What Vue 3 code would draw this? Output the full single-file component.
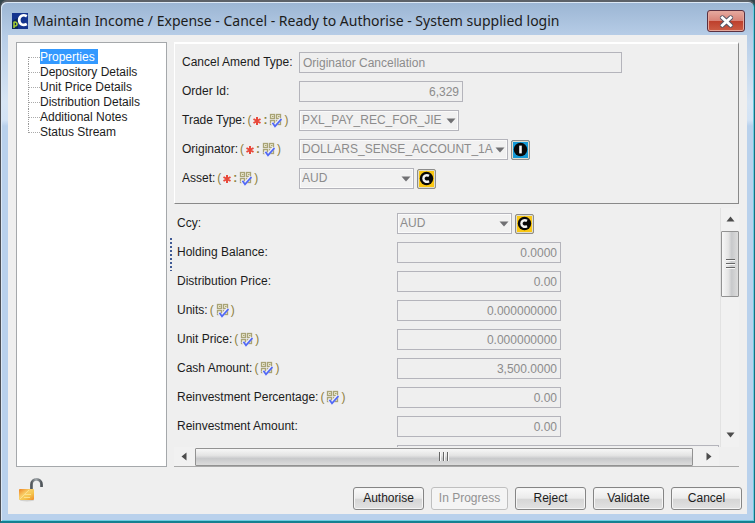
<script setup>
import { ref } from 'vue'

const sections = ['Properties', 'Depository Details', 'Unit Price Details', 'Distribution Details', 'Additional Notes', 'Status Stream']
const selected = ref('Properties')

const header = [
  { id: 'amend', label: 'Cancel Amend Type:', kind: 'text', value: 'Originator Cancellation', size: 'wide' },
  { id: 'order', label: 'Order Id:', kind: 'number', value: '6,329', size: 'medium' },
  { id: 'trade', label: 'Trade Type:', kind: 'select', value: 'PXL_PAY_REC_FOR_JIE', size: 'trade', required: true, checked: true },
  { id: 'originator', label: 'Originator:', kind: 'select', value: 'DOLLARS_SENSE_ACCOUNT_1A', size: 'account', required: true, checked: true, lookup: 'i' },
  { id: 'asset', label: 'Asset:', kind: 'select', value: 'AUD', size: 'short', required: true, checked: true, lookup: 'c' }
]

const details = [
  { id: 'ccy', label: 'Ccy:', kind: 'select', value: 'AUD', size: 'short', lookup: 'c' },
  { id: 'balance', label: 'Holding Balance:', kind: 'number', value: '0.0000', size: 'medium' },
  { id: 'distribution', label: 'Distribution Price:', kind: 'number', value: '0.00', size: 'medium' },
  { id: 'units', label: 'Units:', kind: 'number', value: '0.000000000', size: 'medium', checked: true },
  { id: 'unitprice', label: 'Unit Price:', kind: 'number', value: '0.000000000', size: 'medium', checked: true },
  { id: 'cash', label: 'Cash Amount:', kind: 'number', value: '3,500.0000', size: 'medium', checked: true },
  { id: 'percentage', label: 'Reinvestment Percentage:', kind: 'number', value: '0.00', size: 'medium', checked: true },
  { id: 'reinvest', label: 'Reinvestment Amount:', kind: 'number', value: '0.00', size: 'medium' }
]

const groups = [
  { name: 'summary', rows: header },
  { name: 'details', rows: details }
]

const actions = [
  { label: 'Authorise' },
  { label: 'In Progress', disabled: true, wide: true },
  { label: 'Reject' },
  { label: 'Validate' },
  { label: 'Cancel' }
]
</script>

<template>
  <div class="dialog">
    <svg class="symbols" aria-hidden="true">
      <symbol id="check" viewBox="0 0 13 15">
        <g fill="#efedd8" stroke="#a8a376" stroke-width="1.3">
          <rect x="1.5" y="1.5" width="4" height="4" />
          <rect x="7.5" y="1.5" width="4" height="4" />
          <rect x="1.5" y="7.5" width="4" height="4" />
          <rect x="7.5" y="7.5" width="4" height="4" />
        </g>
        <path d="M3 3.5 h1.5 M9 3.5 h1.5" stroke="#a8a376" />
        <path d="M2.5 9.5 L5.5 13 L11.8 5.5" fill="none" stroke="#eeeef8" stroke-width="3" />
        <path d="M3.5 9.8 L6 13.4 L12.5 6" fill="none" stroke="#5068f5" stroke-width="1.8" />
      </symbol>
      <symbol id="star" viewBox="0 0 8 8">
        <path d="M4 0 V8 M0.5 2 L7.5 6 M7.5 2 L0.5 6" stroke="#e8483a" stroke-width="2" fill="none" />
      </symbol>
      <symbol id="arrow" viewBox="0 0 10 6">
        <path d="M0.5 0.5 H9.5 L5 5.5 Z" fill="#707073" />
      </symbol>
    </svg>

    <header class="titlebar">
      <svg class="logo" viewBox="0 0 16 16" aria-hidden="true">
        <rect width="16" height="16" fill="#14348f" />
        <path d="M0 8 L6 5 V16 H0 Z" fill="#0b2a5c" />
        <path d="M14.8 3.2 C10.5 0.8 7.2 3.4 7.2 6.9 C7.2 11 10.8 13.2 14.8 11" fill="none" stroke="#fff" stroke-width="2.7" />
        <path d="M2 15 V8.8 M2 9.3 C5.6 7.8 6.3 13.6 2.4 13" fill="none" stroke="#a9d230" stroke-width="1.5" />
      </svg>
      <h1>Maintain Income / Expense - Cancel - Ready to Authorise - System supplied login</h1>
      <button class="close" type="button" aria-label="Close">
        <svg viewBox="0 0 14 12" aria-hidden="true">
          <path d="M3.2 2.5 L10.8 9.5 M10.8 2.5 L3.2 9.5" stroke="#535666" stroke-width="4.6" stroke-linecap="round" />
          <path d="M3.2 2.5 L10.8 9.5 M10.8 2.5 L3.2 9.5" stroke="#fff" stroke-width="2.8" stroke-linecap="square" />
        </svg>
      </button>
    </header>

    <main class="client">
      <div class="body">
        <nav class="tree">
          <ul>
            <li v-for="name in sections" :key="name">
              <a href="#" :class="{ active: name === selected }" @click.prevent="selected = name">{{ name }}</a>
            </li>
          </ul>
        </nav>

        <div class="forms">
          <section v-for="group in groups" :key="group.name" :class="group.name">
            <div class="rows">
              <div v-for="row in group.rows" :key="row.id" class="row">
                <label :for="row.id">
                  <span>{{ row.label }}</span>
                  <span v-if="row.checked" class="flags">
                    <span>(</span>
                    <svg v-if="row.required" class="star"><use href="#star" /></svg>
                    <b v-if="row.required">:</b>
                    <svg class="check"><use href="#check" /></svg>
                    <span>)</span>
                  </span>
                </label>
                <span v-if="row.kind === 'select'" class="combo" :class="row.size">
                  <select :id="row.id" disabled><option>{{ row.value }}</option></select>
                  <svg class="arrow"><use href="#arrow" /></svg>
                </span>
                <input v-else :id="row.id" type="text" :class="[row.size, row.kind]" :value="row.value" disabled>
                <button v-if="row.lookup" class="lookup" :class="row.lookup" type="button" aria-label="Look up">
                  <svg viewBox="0 0 15 15" aria-hidden="true">
                    <circle cx="7.5" cy="7.5" r="6.7" fill="#080808" />
                    <path v-if="row.lookup === 'i'" d="M7.5 3.6 V11.4" stroke="#f4f4f4" stroke-width="2.6" />
                    <path v-else d="M10 4.9 C7.2 3.2 4.4 4.9 4.4 7.5 C4.4 10.1 7.2 11.8 10 10.1" fill="none" stroke="#f4f4f4" stroke-width="2.4" />
                  </svg>
                </button>
              </div>
              <div v-if="group.name === 'details'" class="row">
                <label for="next"></label>
                <input id="next" class="next" type="text" aria-label="Next field" disabled>
              </div>
            </div>
            <template v-if="group.name === 'details'">
              <div class="vbar">
                <svg class="tip" viewBox="0 0 9 6"><path d="M0.5 5.5 L4.5 0.5 L8.5 5.5 Z" fill="#4c4c4c" /></svg>
                <div class="vthumb"><i></i><i></i><i></i></div>
                <div class="vtrack"></div>
                <svg class="tip" viewBox="0 0 9 6"><path d="M0.5 0.5 H8.5 L4.5 5.5 Z" fill="#4c4c4c" /></svg>
              </div>
              <div class="hbar">
                <svg class="side" viewBox="0 0 6 9"><path d="M5.5 0.5 V8.5 L0.5 4.5 Z" fill="#4c4c4c" /></svg>
                <div class="hthumb"><i></i><i></i><i></i></div>
                <svg class="side" viewBox="0 0 6 9"><path d="M0.5 0.5 V8.5 L5.5 4.5 Z" fill="#4c4c4c" /></svg>
              </div>
              <div class="grip"></div>
            </template>
          </section>
        </div>
      </div>

      <footer>
        <svg class="lock" viewBox="0 0 26 25" aria-hidden="true">
          <defs>
            <linearGradient id="brass" x1="0" y1="0" x2="1" y2="1">
              <stop offset="0" stop-color="#ed8222" />
              <stop offset="0.4" stop-color="#f9cf68" />
              <stop offset="0.65" stop-color="#f5c44c" />
              <stop offset="1" stop-color="#ef8b27" />
            </linearGradient>
            <linearGradient id="steel" x1="0" y1="0" x2="1" y2="0">
              <stop offset="0" stop-color="#555a5e" />
              <stop offset="0.45" stop-color="#a4aaae" />
              <stop offset="1" stop-color="#50565b" />
            </linearGradient>
          </defs>
          <ellipse cx="9" cy="23.2" rx="7" ry="1.2" fill="#d2d2d0" />
          <path d="M13.5 13 V7.5 C13.5 0.7 23.5 0.7 23.5 7.5 V10" fill="none" stroke="url(#steel)" stroke-width="2.8" />
          <rect x="1" y="12" width="15" height="11" rx="1" fill="url(#brass)" />
          <path d="M2 22 L11 13 M7 17.5 H13 M6 20.5 H12" stroke="#fce08c" stroke-width="1" />
        </svg>
        <button v-for="action in actions" :key="action.label" type="button" class="action" :class="{ broad: action.wide }" :disabled="action.disabled">{{ action.label }}</button>
      </footer>
    </main>
  </div>
</template>

<style>
body {
  margin: 0;
  background: #33454c;
}
</style>

<style scoped>
* {
  box-sizing: border-box;
}

.dialog {
  position: relative;
  display: flex;
  flex-direction: column;
  height: 100vh;
  padding: 0 7px 7px;
  border: 1px solid #4c4f55;
  border-top: 2px solid #5c6168;
  border-right: 1px solid #14707f;
  border-bottom: 2px solid #158090;
  border-radius: 7px 7px 0 0;
  background: linear-gradient(#9bb5d3, #b7cde7 34px, #d7e5f4 100px, #d3e3f5 118px, #b9d1ec 124px, #b9d1ec);
  box-shadow: inset 1px 1px 0 #dce8f5, inset -1px -1px 0 #6acbe0;
  color: #1c1c1c;
  font: 12px/15px "Liberation Sans", Arial, sans-serif;
}

.symbols {
  position: absolute;
  width: 0;
  height: 0;
}

.titlebar {
  display: flex;
  flex: none;
  align-items: center;
  gap: 5px;
  height: 33px;
  padding: 5px 2px 0 4px;
}

.logo {
  width: 16px;
  height: 16px;
}

h1 {
  flex: 1;
  margin: 0;
  font: 14px/22px "Noto Sans", sans-serif;
  white-space: nowrap;
}

.close {
  display: flex;
  align-items: center;
  justify-content: center;
  width: 38px;
  height: 22px;
  padding: 0;
  border: 1px solid #5b3040;
  border-radius: 3px;
  background: linear-gradient(#e6aaa0, #d98478 48%, #bd3f2c 50%, #cc5d45);
  box-shadow: inset 0 0 0 1px #e5a79b;
}

.close svg {
  width: 15px;
  height: 13px;
}

.client {
  display: flex;
  flex: 1;
  flex-direction: column;
  min-height: 0;
  padding: 7px 5px 4px 8px;
  background: #efefef;
}

.body {
  display: flex;
  flex: 1;
  gap: 7px;
  min-height: 0;
  padding-right: 3px;
}

.tree {
  flex: none;
  width: 151px;
  padding: 6px 11px;
  border: 1px solid #a5a8ab;
  background: #fff;
}

.tree ul {
  margin: 0;
  padding: 0;
  list-style: none;
}

.tree li {
  display: flex;
  height: 15px;
  white-space: nowrap;
}

.tree li::before {
  width: 11px;
  height: 15px;
  border-left: 1px dotted #999;
  background: linear-gradient(90deg, #aaa 50%, transparent 50%) 0 8px / 2px 1px repeat-x;
  content: "";
}

.tree li:first-child::before {
  height: 7px;
  margin-top: 8px;
  background-position: 0 0;
}

.tree li:last-child::before {
  height: 9px;
}

.tree a {
  height: 15px;
  padding-right: 3px;
  color: inherit;
  line-height: 16px;
  text-decoration: none;
}

.tree a.active {
  background: #3399ff;
  color: #fff;
}

.forms {
  display: flex;
  flex: 1;
  flex-direction: column;
  gap: 4px;
  min-width: 0;
}

.summary {
  flex: none;
  padding: 8px 8px 14px 7px;
  border: 1px solid #898989;
  border-top: 2px solid #fff;
  border-left-color: #fff;
}

.rows {
  display: flex;
  flex-direction: column;
  gap: 8px;
  min-width: 0;
}

.row {
  display: flex;
  flex: none;
  align-items: center;
  height: 21px;
}

label {
  display: flex;
  flex: none;
  gap: 2px;
  width: 117px;
  white-space: nowrap;
}

.details label {
  width: 220px;
}

.flags {
  display: flex;
  gap: 2px;
  align-items: center;
  height: 15px;
  color: #8d8040;
}

.star {
  width: 8px;
  height: 8px;
}

.check {
  width: 13px;
  height: 15px;
}

input,
select {
  height: 21px;
  margin: 0;
  border: 1px solid #b4b4bb;
  border-radius: 0;
  background: #efefef;
  color: #8c8c8c;
  font: inherit;
  opacity: 1;
}

input {
  padding: 0 3px;
}

.number {
  text-align: right;
}

.combo {
  position: relative;
  height: 21px;
}

select {
  width: 100%;
  padding: 0 12px 0 2px;
  background: #f1f1f1;
  box-shadow: inset 0 0 0 1px #fafafa;
  appearance: none;
}

.arrow {
  position: absolute;
  top: 8px;
  right: 3px;
  width: 10px;
  height: 6px;
  pointer-events: none;
}

.wide {
  width: 323px;
}

.medium {
  width: 164px;
}

.trade {
  width: 160px;
}

.account {
  width: 209px;
}

.short {
  width: 115px;
}

.next {
  width: 100%;
}

.lookup {
  display: flex;
  align-items: center;
  justify-content: center;
  width: 19px;
  height: 20px;
  margin-left: 3px;
  padding: 0;
  border: 1px solid #8c8c8c;
  border-radius: 2px;
  background: #fac713;
  box-shadow: inset 0 0 0 1px #dedccf;
}

.lookup.i {
  background: #1499d6;
}

.lookup svg {
  flex: none;
  width: 15px;
  height: 15px;
}

.details {
  position: relative;
  display: grid;
  flex: 1;
  grid-template: minmax(0, 1fr) 19px / minmax(0, 1fr) 19px;
  column-gap: 1px;
  min-height: 0;
  border-bottom: 1px solid #a9a9a9;
}

.details .rows {
  overflow: hidden;
  padding: 5px 0 0 3px;
}

.vbar {
  display: flex;
  flex-direction: column;
  align-items: center;
  border-left: 1px solid #e2e2e2;
  background: #f1f1f1;
}

.tip {
  flex: none;
  width: 9px;
  height: 6px;
  margin: 8px 0 9px;
}

.vthumb {
  display: flex;
  flex: 3;
  flex-direction: column;
  align-items: center;
  justify-content: center;
  gap: 2px;
  width: 18px;
  border: 1px solid #929292;
  border-radius: 1px;
  background: linear-gradient(90deg, #f7f7f7, #e4e4e4 40%, #c8c9cb 60%, #dcdcdc);
}

.vthumb i {
  width: 9px;
  height: 2px;
  border-top: 1px solid #666;
  background: #f8f8f8;
}

.vtrack {
  flex: 6;
}

.hbar {
  display: flex;
  align-items: center;
  background: #f1f1f1;
}

.side {
  flex: none;
  width: 6px;
  height: 9px;
  margin: 0 8px 0 7px;
}

.hthumb {
  display: flex;
  flex: 1;
  align-items: center;
  justify-content: center;
  gap: 2px;
  height: 18px;
  border: 1px solid #929292;
  border-radius: 1px;
  background: linear-gradient(#f7f7f7, #e4e4e4 40%, #c8c9cb 60%, #dcdcdc);
}

.hthumb + .side {
  margin: 0 7px 0 13px;
}

.hthumb i {
  width: 2px;
  height: 9px;
  border-left: 1px solid #666;
  background: #f8f8f8;
}

.grip {
  position: absolute;
  top: 30px;
  left: -4px;
  width: 2px;
  height: 33px;
  background: repeating-linear-gradient(#405a95 0 2px, transparent 2px 4px);
}

footer {
  display: flex;
  flex: none;
  align-items: flex-start;
  justify-content: flex-end;
  gap: 7px;
  height: 43px;
  padding-top: 20px;
}

.lock {
  width: 26px;
  height: 25px;
  margin: -10px auto 0 2px;
}

.action {
  width: 71px;
  height: 23px;
  padding: 0;
  border: 1px solid #858585;
  border-radius: 3px;
  background: linear-gradient(#fafafa, #ebebeb 48%, #d6d6d6 55%, #e2e2e2);
  box-shadow: inset 0 0 0 1px #f5f5f5;
  color: #1c1c1c;
  font: inherit;
}

.action.broad {
  width: 77px;
}

.action:disabled {
  border-color: #bfbfbf;
  background: #f4f4f4;
  color: #929292;
}
</style>
